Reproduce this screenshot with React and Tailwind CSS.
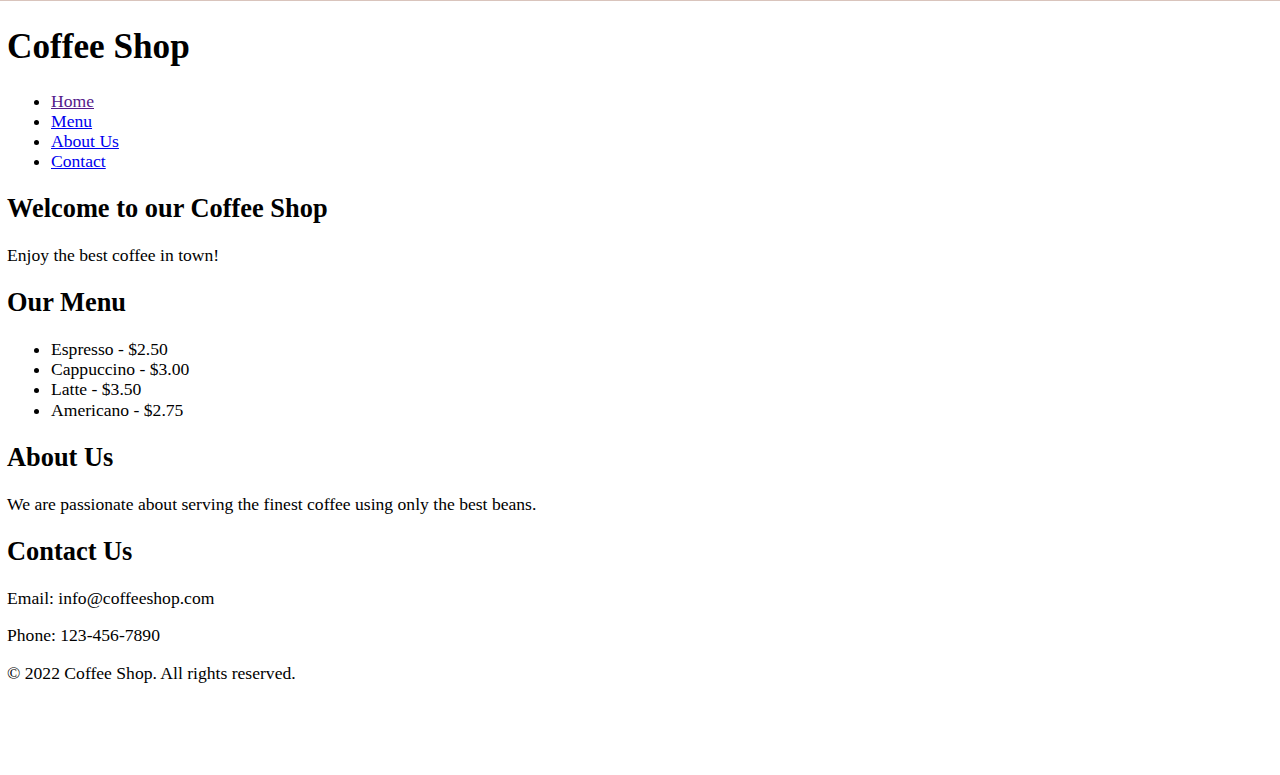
export default function App() {
  const menu = [
    "Espresso - $2.50",
    "Cappuccino - $3.00",
    "Latte - $3.50",
    "Americano - $2.75",
  ];

  return (
    <div className="min-h-[775px] bg-white text-black font-['Liberation_Serif','Times_New_Roman',serif]">
      <div className="h-px bg-[#d9c4bc]" />
      <div className="px-[7px] pt-[3px] pb-[20px]">
        <header>
          <h1 className="text-[35.2px] leading-[40.2px] font-bold mt-[23.4px] mb-[23.4px]">
            Coffee Shop
          </h1>
          <nav>
            <ul className="list-disc pl-[44px] my-[17.5px] text-[17.6px] leading-[20.1px]">
              <li>
                <a href="#home" className="underline text-[#551a8b]">
                  Home
                </a>
              </li>
              <li>
                <a href="#menu" className="underline text-[#0000ee]">
                  Menu
                </a>
              </li>
              <li>
                <a href="#about" className="underline text-[#0000ee]">
                  About Us
                </a>
              </li>
              <li>
                <a href="#contact" className="underline text-[#0000ee]">
                  Contact
                </a>
              </li>
            </ul>
          </nav>
        </header>

        <section id="home">
          <h2 className="text-[26.4px] leading-[30.2px] font-bold my-[21.8px]">
            Welcome to our Coffee Shop
          </h2>
          <p className="text-[17.6px] leading-[20.1px] my-[17.5px]">
            Enjoy the best coffee in town!
          </p>
        </section>

        <section id="menu">
          <h2 className="text-[26.4px] leading-[30.2px] font-bold my-[21.8px]">
            Our Menu
          </h2>
          <ul className="list-disc pl-[44px] my-[17.5px] text-[17.6px] leading-[20.2px]">
            {menu.map((item) => (
              <li key={item}>{item}</li>
            ))}
          </ul>
        </section>

        <section id="about">
          <h2 className="text-[26.4px] leading-[30.2px] font-bold my-[21.8px]">
            About Us
          </h2>
          <p className="text-[17.6px] leading-[20.1px] my-[17.5px]">
            We are passionate about serving the finest coffee using only the best beans.
          </p>
        </section>

        <section id="contact">
          <h2 className="text-[26.4px] leading-[30.2px] font-bold my-[21.8px]">
            Contact Us
          </h2>
          <p className="text-[17.6px] leading-[20.1px] my-[17.5px]">
            Email: info@coffeeshop.com
          </p>
          <p className="text-[17.6px] leading-[20.1px] my-[17.5px]">
            Phone: 123-456-7890
          </p>
        </section>

        <footer>
          <p className="text-[17.6px] leading-[20.1px] my-[17.5px]">
            © 2022 Coffee Shop. All rights reserved.
          </p>
        </footer>
      </div>
    </div>
  );
}
